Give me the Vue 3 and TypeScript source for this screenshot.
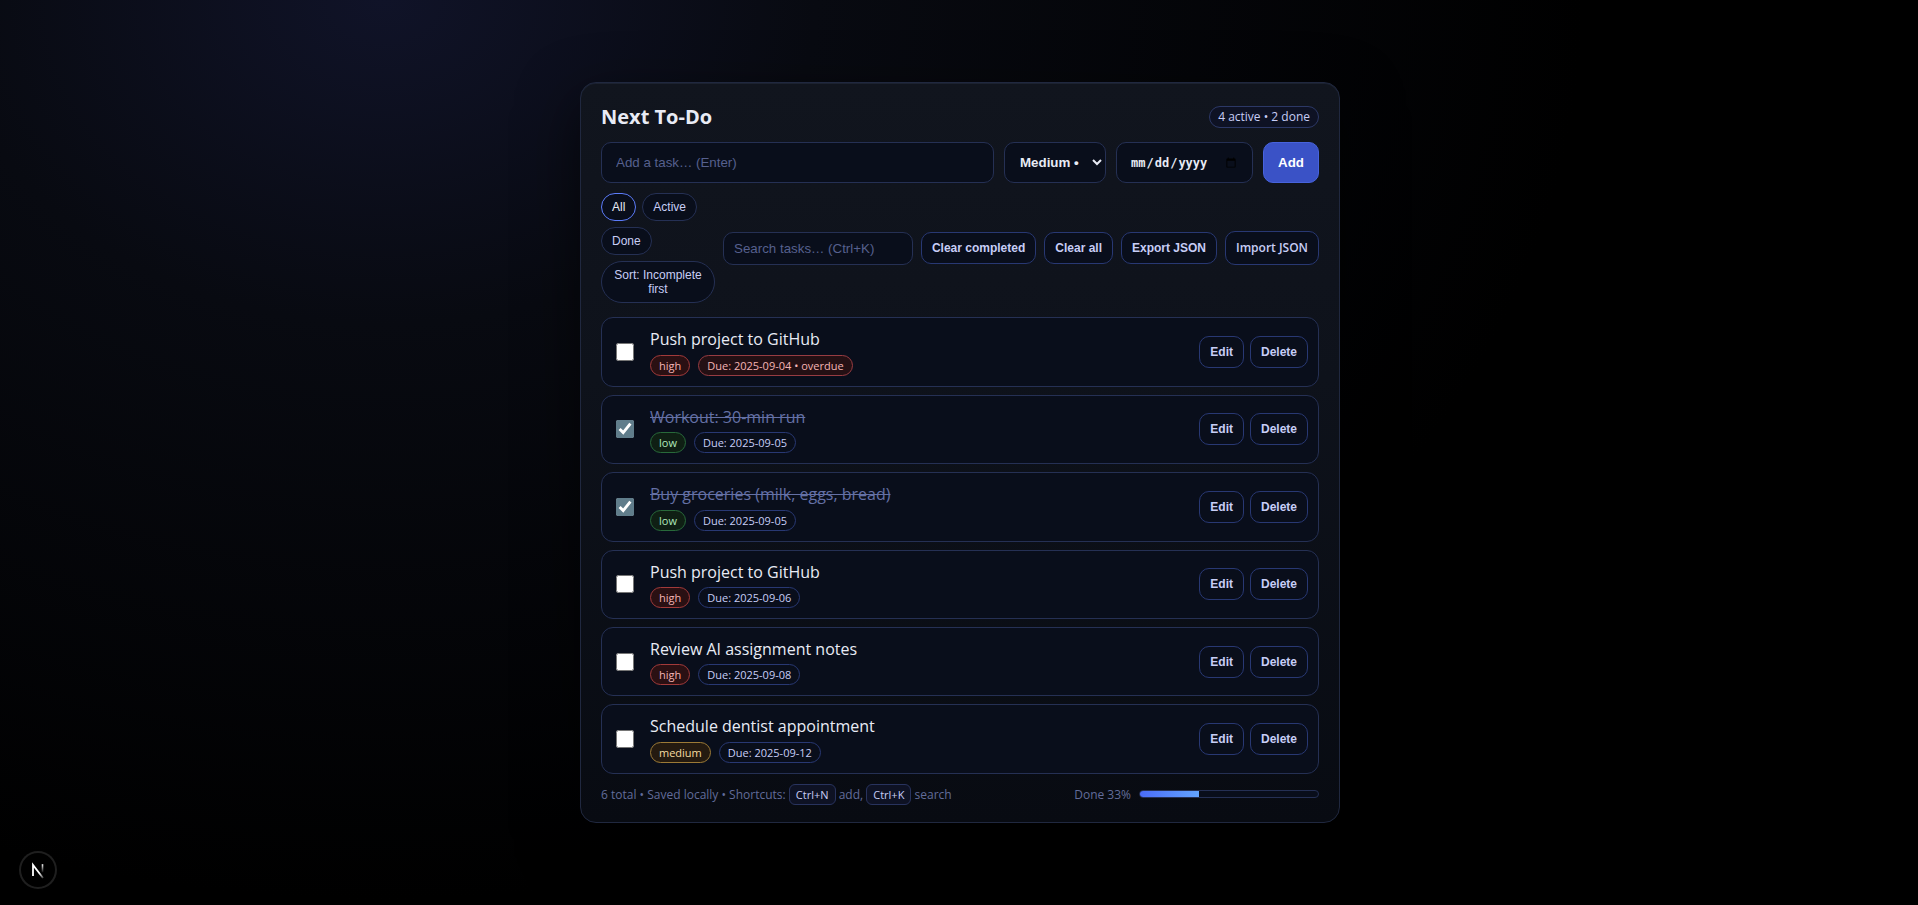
<script setup lang="ts">
import { computed, ref } from 'vue'

type Priority = 'low' | 'medium' | 'high'
interface Task {
  id: number
  title: string
  priority: Priority
  due: string
  overdue: boolean
  done: boolean
}

const tasks = ref<Task[]>([
  { id: 1, title: 'Push project to GitHub', priority: 'high', due: '2025-09-04', overdue: true, done: false },
  { id: 2, title: 'Workout: 30-min run', priority: 'low', due: '2025-09-05', overdue: false, done: true },
  { id: 3, title: 'Buy groceries (milk, eggs, bread)', priority: 'low', due: '2025-09-05', overdue: false, done: true },
  { id: 4, title: 'Push project to GitHub', priority: 'high', due: '2025-09-06', overdue: false, done: false },
  { id: 5, title: 'Review AI assignment notes', priority: 'high', due: '2025-09-08', overdue: false, done: false },
  { id: 6, title: 'Schedule dentist appointment', priority: 'medium', due: '2025-09-12', overdue: false, done: false },
])

const filters = ['All', 'Active', 'Done']
const filter = ref('All')
const draft = ref('')
const priority = ref<Priority>('medium')
const due = ref('')
const search = ref('')

const doneCount = computed(() => tasks.value.filter((t) => t.done).length)
const activeCount = computed(() => tasks.value.length - doneCount.value)
const percent = computed(() =>
  tasks.value.length ? Math.round((doneCount.value / tasks.value.length) * 100) : 0,
)
const visible = computed(() =>
  tasks.value.filter(
    (t) =>
      (filter.value === 'All' || (filter.value === 'Done') === t.done) &&
      t.title.toLowerCase().includes(search.value.toLowerCase()),
  ),
)

function addTask() {
  const title = draft.value.trim()
  if (!title) return
  tasks.value.push({ id: Date.now(), title, priority: priority.value, due: due.value, overdue: false, done: false })
  draft.value = ''
}
function remove(id: number) {
  tasks.value = tasks.value.filter((t) => t.id !== id)
}
function clearCompleted() {
  tasks.value = tasks.value.filter((t) => !t.done)
}
</script>

<template>
  <div class="page">
    <main class="card">
      <header class="header">
        <h1>Next To-Do</h1>
        <span class="count">{{ activeCount }} active • {{ doneCount }} done</span>
      </header>

      <form class="composer" @submit.prevent="addTask">
        <input v-model="draft" class="field" type="text" aria-label="New task" placeholder="Add a task… (Enter)" />
        <select v-model="priority" class="field select" aria-label="Priority">
          <option value="low">Low •</option>
          <option value="medium">Medium •</option>
          <option value="high">High •</option>
        </select>
        <input v-model="due" class="field date" type="date" aria-label="Due date" />
        <button class="add" type="submit">Add</button>
      </form>

      <div class="toolbar">
        <div class="filters">
          <button
            v-for="name in filters"
            :key="name"
            type="button"
            class="chip"
            :class="{ selected: filter === name }"
            @click="filter = name"
          >{{ name }}</button>
          <button type="button" class="chip">Sort: Incomplete first</button>
        </div>
        <input v-model="search" class="search" type="text" aria-label="Search tasks" placeholder="Search tasks… (Ctrl+K)" />
        <button type="button" class="ghost" @click="clearCompleted">Clear completed</button>
        <button type="button" class="ghost" @click="tasks = []">Clear all</button>
        <button type="button" class="ghost">Export JSON</button>
        <button type="button" class="ghost import">Import JSON</button>
      </div>

      <ul class="list">
        <li v-for="task in visible" :key="task.id" class="task">
          <input v-model="task.done" type="checkbox" :aria-label="task.title" />
          <div class="body">
            <div class="title" :class="{ done: task.done }">{{ task.title }}</div>
            <div class="tags">
              <span class="tag" :class="task.priority">{{ task.priority }}</span>
              <span class="tag" :class="{ overdue: task.overdue }">Due: {{ task.due }}{{ task.overdue ? ' • overdue' : '' }}</span>
            </div>
          </div>
          <div class="actions">
            <button type="button" class="ghost">Edit</button>
            <button type="button" class="ghost" @click="remove(task.id)">Delete</button>
          </div>
        </li>
      </ul>

      <footer class="footer">
        <div>{{ tasks.length }} total • Saved locally • Shortcuts: <kbd>Ctrl+N</kbd> add, <kbd>Ctrl+K</kbd> search</div>
        <div class="progress">
          <span>Done {{ percent }}%</span>
          <div class="track"><div class="fill" :style="{ width: percent + '%' }"></div></div>
        </div>
      </footer>
    </main>

    <button class="badge" type="button" aria-label="Open developer tools">
      <svg width="38" height="38" viewBox="0 0 38 38" fill="none" aria-hidden="true">
        <defs>
          <linearGradient id="diag" x1="18" y1="18" x2="25" y2="27" gradientUnits="userSpaceOnUse">
            <stop offset="0.4" stop-color="#fff" />
            <stop offset="1" stop-color="#fff" stop-opacity="0.2" />
          </linearGradient>
          <linearGradient id="stem" x1="24" y1="13" x2="24" y2="22" gradientUnits="userSpaceOnUse">
            <stop stop-color="#fff" />
            <stop offset="1" stop-color="#fff" stop-opacity="0" />
          </linearGradient>
        </defs>
        <path d="M14 25V14L24 27" stroke="url(#diag)" stroke-width="1.8" />
        <path d="M23.5 13.200V21.500" stroke="url(#stem)" stroke-width="1.6" />
      </svg>
    </button>
  </div>
</template>

<style>
body {
  margin: 0;
  background: #000;
}
</style>

<style scoped>
* {
  box-sizing: border-box;
}
.page {
  min-height: 100vh;
  display: grid;
  place-items: center;
  padding: 24px 22px 24px 24px;
  color: #e8ebf5;
  font-family: 'Open Sans', 'Noto Sans', sans-serif;
  font-size: 16px;
  background:
    radial-gradient(1200px 900px at 20% 0%, #101328 0%, #080a11 36%, transparent 100%),
    #000;
}
button,
input,
select {
  font-family: 'Liberation Sans', Arial, sans-serif;
  margin: 0;
}
.card {
  width: 100%;
  max-width: 760px;
  padding: 20px 20px 17px;
  border: 1px solid #20283f;
  border-radius: 16px;
  background: linear-gradient(180deg, #11151e, #0e121b 40%, #080b12);
  box-shadow: 0 20px 60px rgba(0, 0, 0, 0.6), inset 0 1px 0 #1c2230;
}
.header {
  display: flex;
  align-items: center;
  justify-content: space-between;
  height: 27px;
  margin-bottom: 12px;
}
h1 {
  margin: 0;
  font-size: 20px;
  line-height: 27px;
  font-weight: 700;
}
.count {
  height: 22px;
  padding: 0 8px;
  border: 1px solid #2c3866;
  border-radius: 999px;
  background: #0e1224;
  color: #c7cdf6;
  font-size: 12px;
  line-height: 20px;
}
.composer {
  display: grid;
  grid-template-columns: 1fr 102px 137px 56px;
  gap: 10px;
}
.field {
  min-width: 0;
  height: 41px;
  padding: 0 14px;
  border: 1px solid #253054;
  border-radius: 10px;
  background: #090e1b;
  color: #e8ebf5;
}
.field::placeholder,
.search::placeholder {
  color: #56608e;
}
.select {
  padding: 0 0 0 11px;
  font-weight: 600;
}
.date {
  padding: 0 13px;
  font-family: 'DejaVu Sans Mono', monospace;
  font-size: 12px;
  font-weight: 600;
}
.add {
  border: 1px solid #4763dc;
  border-radius: 10px;
  background: #3a52c6;
  color: #fff;
  font-weight: 600;
}
.toolbar {
  display: flex;
  align-items: center;
  gap: 8px;
  margin-top: 10px;
}
.filters {
  display: flex;
  flex: 0 0 114px;
  flex-wrap: wrap;
  gap: 6px;
}
.chip {
  padding: 6px 10px;
  border: 1px solid #253054;
  border-radius: 999px;
  background: #090e1b;
  color: #c7cdf6;
  font-size: 12px;
  line-height: 14px;
}
.chip.selected {
  border-color: #5c7cfa;
  color: #e8ebf5;
}
.search {
  flex: 1;
  min-width: 0;
  height: 33px;
  padding: 0 10px;
  border: 1px solid #253054;
  border-radius: 10px;
  background: #090e1b;
  color: #e8ebf5;
}
.ghost {
  padding: 8px 10px;
  border: 1px solid #283873;
  border-radius: 10px;
  background: #090e1b;
  color: #c7cdf6;
  font-size: 12px;
  line-height: 14px;
  font-weight: 600;
  white-space: nowrap;
}
.import {
  font-family: 'Open Sans', 'Noto Sans', sans-serif;
  line-height: 16px;
}
.list {
  display: grid;
  gap: 8px;
  margin: 14px 0 0;
  padding: 0;
  list-style: none;
}
.task {
  display: flex;
  align-items: center;
  gap: 12px;
  padding: 10px;
  border: 1px solid #253054;
  border-radius: 12px;
  background: #090e1b;
}
.task input {
  width: 18px;
  height: 18px;
  margin: 0 4px;
  accent-color: #607d8b;
}
.body {
  flex: 1;
  min-width: 0;
}
.title {
  line-height: 1.4;
}
.title.done {
  color: #6470a5;
  text-decoration: line-through;
}
.tags {
  display: flex;
  gap: 8px;
  margin-top: 4px;
}
.tag {
  height: 21px;
  padding: 0 8px;
  border: 1px solid #283873;
  border-radius: 999px;
  color: #c7cdf6;
  font-size: 11px;
  line-height: 19px;
}
.tag.high {
  border-color: #a23a3a;
  background: #2a1013;
  color: #f5b5b5;
}
.tag.overdue {
  border-color: #983c42;
  background: #241014;
  color: #f5b5b5;
}
.tag.low {
  border-color: #28693a;
  background: #0f1f14;
  color: #b0e8bb;
}
.tag.medium {
  border-color: #9c7a36;
  background: #241a10;
  color: #f5dca0;
}
.actions {
  display: flex;
  gap: 6px;
}
.footer {
  display: flex;
  align-items: center;
  justify-content: space-between;
  margin-top: 10px;
  color: #626c9a;
  font-size: 12px;
  line-height: 21px;
}
kbd {
  display: inline-block;
  height: 21px;
  padding: 0 6px;
  border: 1px solid #28335e;
  border-radius: 6px;
  background: #0e1224;
  color: #c7cdf6;
  font-family: inherit;
  font-size: 11px;
  line-height: 19px;
}
.progress {
  display: flex;
  align-items: center;
  gap: 8px;
}
.track {
  width: 180px;
  height: 8px;
  border: 1px solid #253054;
  border-radius: 999px;
  background: #090e1b;
  overflow: hidden;
}
.fill {
  height: 100%;
  background: linear-gradient(90deg, #4a6cf7, #63a4ff);
}
.badge {
  position: fixed;
  left: 19px;
  bottom: 16px;
  width: 38px;
  height: 38px;
  padding: 0;
  border: 0;
  border-radius: 50%;
  background: #000;
  box-shadow: inset 0 0 0 2px #1f1f1f;
}
.badge svg {
  display: block;
}
</style>
